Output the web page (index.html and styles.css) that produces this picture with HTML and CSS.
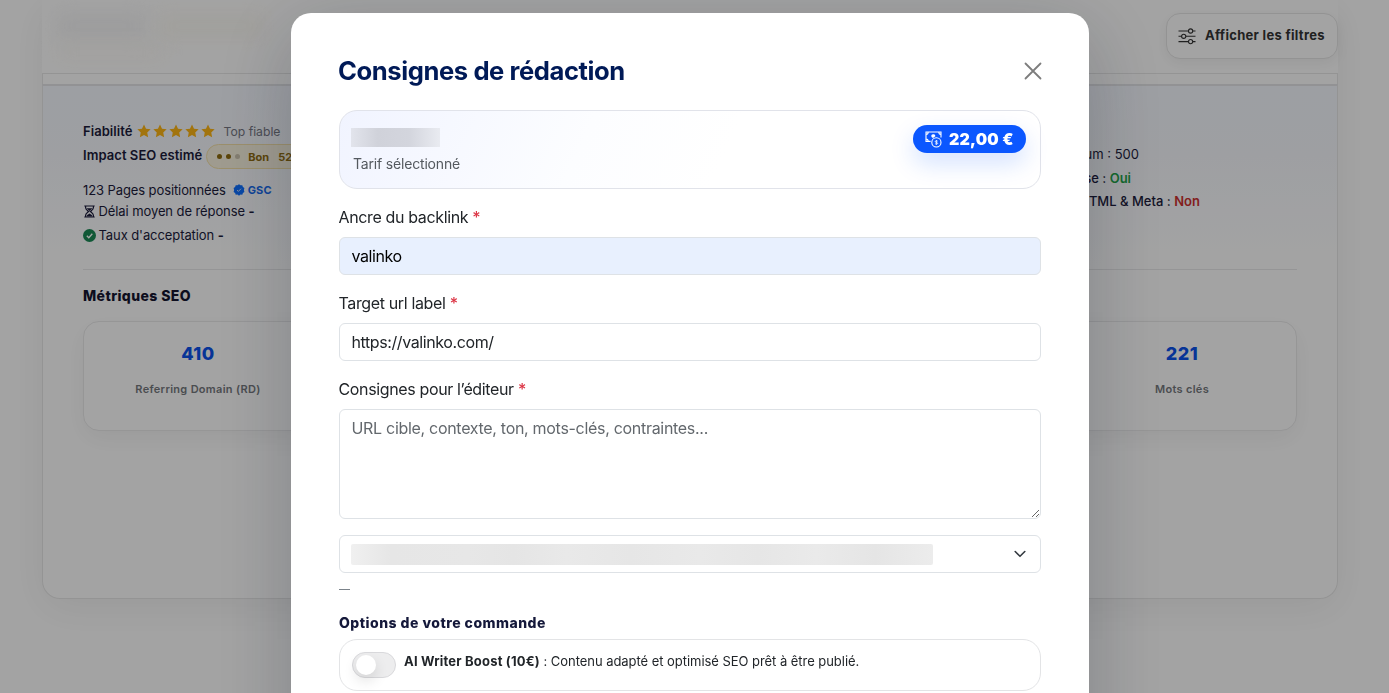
FILE: index.html
```
<!DOCTYPE html>
<html lang="fr">
<head>
    <meta charset="UTF-8">
    <meta name="viewport" content="width=device-width, initial-scale=1.0">
    <title>Consignes de rédaction</title>
    <link rel="stylesheet" href="styles.css">
</head>
<body>
    <div class="page">
        <header class="toolbar">
            <div class="toolbar-info">
                <span class="smudge smudge-grey"></span>
                <span class="smudge smudge-gold"></span>
                <span class="smudge smudge-sand"></span>
            </div>
            <button class="filter-btn" type="button">
                <svg width="18" height="17" viewBox="0 0 18 17" fill="none" stroke="currentColor" stroke-width="1.1">
                    <path d="M.5 3h10M14.7 3h2.8M.5 8.3h3.2M7.8 8.3h9.7M.5 13.6h10M14.7 13.6h2.8"/>
                    <circle cx="12.6" cy="3" r="2.1"/>
                    <circle cx="5.7" cy="8.3" r="2.1"/>
                    <circle cx="12.6" cy="13.6" r="2.1"/>
                </svg>
                <span>Afficher les filtres</span>
            </button>
        </header>
        <div class="strip"></div>
        <main class="site-card">
            <div class="site-details">
                <div class="details-left">
                    <div class="row row-trust">
                        <strong>Fiabilité</strong>
                        <span class="stars">
                            <svg viewBox="0 0 16 16"><path d="M8 .5l2.300 4.800 5.300.7-3.900 3.700 1 5.300L8 12.500 3.300 15l1-5.300L.4 6l5.300-.7z"/></svg>
                            <svg viewBox="0 0 16 16"><path d="M8 .5l2.300 4.800 5.300.7-3.900 3.700 1 5.300L8 12.500 3.300 15l1-5.300L.4 6l5.300-.7z"/></svg>
                            <svg viewBox="0 0 16 16"><path d="M8 .5l2.300 4.800 5.300.7-3.900 3.700 1 5.300L8 12.500 3.300 15l1-5.300L.4 6l5.300-.7z"/></svg>
                            <svg viewBox="0 0 16 16"><path d="M8 .5l2.300 4.800 5.300.7-3.900 3.700 1 5.300L8 12.500 3.300 15l1-5.300L.4 6l5.300-.7z"/></svg>
                            <svg viewBox="0 0 16 16"><path d="M8 .5l2.300 4.800 5.300.7-3.900 3.700 1 5.300L8 12.500 3.300 15l1-5.300L.4 6l5.300-.7z"/></svg>
                        </span>
                        <span class="trust-label">Top fiable</span>
                    </div>
                    <div class="row row-impact">
                        <strong>Impact SEO estimé</strong>
                        <span class="impact-pill"><i></i><i></i><i class="off"></i><b>Bon</b><b>52</b></span>
                    </div>
                    <div class="row row-pages">
                        <span>123 Pages positionnées</span>
                        <span class="gsc">
                            <svg width="12" height="12" viewBox="0 0 12 12"><path fill="#0d6efd" d="M6 .3l1.5 1 1.8-.1.6 1.7 1.5 1L10.900 6l.5 1.900-1.500 1.100-.6 1.700-1.800-.1-1.500 1.100-1.500-1.100-1.800.1-.6-1.700L.6 7.900 1.100 6 .6 3.900l1.500-1 .6-1.700 1.800.1z"/><path d="M4 6.100l1.400 1.300L8 4.700" fill="none" stroke="#cfdcf5" stroke-width="1"/></svg>
                            GSC
                        </span>
                    </div>
                    <div class="row row-delay">
                        <svg width="13" height="13" viewBox="0 0 13 13" fill="none" stroke="currentColor" stroke-width="1.200"><path d="M1.300 1h10.400M1.300 12h10.400M2.600 1v1.700c0 1.700 1.500 2.600 3 3.800-1.500 1.200-3 2.100-3 3.800V12M10.400 1v1.700c0 1.700-1.500 2.600-3 3.800 1.500 1.200 3 2.100 3 3.800V12"/><path fill="currentColor" stroke="none" d="M3.500 3.300h6L6.500 6zM3.500 11.500c.3-1.500 1.600-1.700 3-2.900 1.400 1.200 2.700 1.400 3 2.900z"/></svg>
                        <span>Délai moyen de réponse <b>-</b></span>
                    </div>
                    <div class="row row-rate">
                        <svg width="13" height="13" viewBox="0 0 13 13"><circle cx="6.500" cy="6.500" r="6.500" fill="#198754"/><path d="M3.800 6.700l2 2 3.500-4" fill="none" stroke="#fff" stroke-width="1.300"/></svg>
                        <span>Taux d'acceptation <b>-</b></span>
                    </div>
                </div>
                <div class="details-right">
                    <div class="rule-words">um : 500</div>
                    <div class="rule-link">se : <b class="yes">Oui</b></div>
                    <div class="rule-meta">TML &amp; Meta : <b class="no">Non</b></div>
                </div>
            </div>
            <h2 class="metrics-title">Métriques SEO</h2>
            <div class="metrics">
                <div class="metric">
                    <strong>410</strong>
                    <span>Referring Domain (RD)</span>
                </div>
                <div class="metric">
                    <strong>221</strong>
                    <span>Mots clés</span>
                </div>
            </div>
        </main>
    </div>

    <div class="backdrop">
        <form class="modal">
            <div class="modal-header">
                <h1>Consignes de rédaction</h1>
                <button class="close" type="button" aria-label="Fermer">
                    <svg width="18" height="18" viewBox="0 0 18 18"><path d="M1.500 1.500l15 15M16.500 1.500l-15 15" stroke="#7d7d7d" stroke-width="1.800" stroke-linecap="round"/></svg>
                </button>
            </div>
            <div class="offer">
                <div>
                    <div class="offer-name"></div>
                    <div class="offer-label">Tarif sélectionné</div>
                </div>
                <div class="price">
                    <svg width="17" height="17" viewBox="0 0 17 17" fill="none" stroke="#fff" stroke-width="1.100">
                        <path d="M5.600 10.400H1V1h15v5.500M1 3.400c1.400 0 2.200-.9 2.200-2.400M16 3.400c-1.400 0-2.200-.9-2.200-2.400M1 8c1.400 0 2.200.9 2.200 2.400"/>
                        <path d="M6.500 5.900a2 2 0 1 1 3.900-.7L8 7z" fill="#fff" stroke="none"/>
                        <circle cx="11.400" cy="11.400" r="4.600"/>
                        <path d="M12.700 10.300c-.4-.7-2.500-.7-2.500.3 0 1.100 2.500.6 2.500 1.700 0 1-2.200 1-2.600.2M11.400 9v4.800" stroke-width=".8"/>
                    </svg>
                    <span>22,00 €</span>
                </div>
            </div>

            <label for="anchor">Ancre du backlink <em>*</em></label>
            <input class="filled" type="text" id="anchor" name="anchor" value="valinko">

            <label for="target">Target url label <em>*</em></label>
            <input type="text" id="target" name="target" value="https://valinko.com/">

            <label for="brief">Consignes pour l’éditeur <em>*</em></label>
            <textarea id="brief" name="brief" placeholder="URL cible, contexte, ton, mots-clés, contraintes..."></textarea>

            <div class="select">
                <span class="select-value"></span>
                <svg width="12" height="8" viewBox="0 0 12 8"><path d="M1.200 1.500L6 6.300l4.800-4.800" fill="none" stroke="#343a40" stroke-width="1.600" stroke-linecap="round" stroke-linejoin="round"/></svg>
            </div>
            <div class="hint">—</div>

            <h3>Options de votre commande</h3>
            <div class="option">
                <span class="switch"></span>
                <p><b>AI Writer Boost (10€)</b> : Contenu adapté et optimisé SEO prêt à être publié.</p>
            </div>
        </form>
    </div>
</body>
</html>
```
FILE: styles.css
```
* {
    box-sizing: border-box;
}
body {
    margin: 0;
    height: 693px;
    overflow: hidden;
    font-family: Inter, "Liberation Sans", sans-serif;
    font-size: 13px;
    color: #1b1b3a;
    background: #fbfbfb;
}
button {
    font-family: inherit;
    cursor: pointer;
}
.page {
    width: 1296px;
    height: 599px;
    margin-left: 42px;
    border-radius: 0 0 18px 18px;
    box-shadow: 0 10px 40px rgba(0, 0, 0, 0.06);
}
.toolbar {
    display: flex;
    justify-content: space-between;
    height: 73px;
    padding-top: 13px;
    background: #fbfbfb;
}
.toolbar-info {
    display: grid;
    grid-template-columns: 90px 110px;
    gap: 6px 10px;
    align-content: start;
    padding-left: 14px;
}
.smudge {
    height: 26px;
    filter: blur(10px);
}
.smudge-grey {
    background: #f0f0f1;
}
.smudge-gold {
    background: #f7f5f0;
}
.smudge-sand {
    grid-column: 1 / 3;
    width: 110px;
    height: 14px;
    background: #f8f6f2;
}
.filter-btn {
    display: flex;
    align-items: center;
    gap: 9px;
    width: 172px;
    height: 46px;
    padding: 0 0 0 11px;
    border: 1px solid #e2e2e2;
    border-radius: 14px;
    background: #fbfbfb;
    box-shadow: 0 4px 14px rgba(0, 0, 0, 0.06);
    color: #333;
    font-size: 13px;
    font-weight: 700;
    letter-spacing: 0.300px;
    white-space: nowrap;
}
.filter-btn svg {
    margin-top: 1px;
}
.filter-btn span {
    margin-top: -2px;
}
.strip {
    height: 11px;
    border: 1px solid #e3e3e3;
    border-bottom: 0;
    background: #fbfbfb;
}
.site-card {
    height: 515px;
    padding: 0 40px;
    border: 1px solid #e3e3e3;
    border-top: 2px solid #e0e1e4;
    border-radius: 0 0 18px 18px;
    background: linear-gradient(#f1f4fa 0, #f3f5f9 70px, #fbfbfb 180px);
}
.site-details {
    display: flex;
    justify-content: space-between;
    height: 184px;
    border-bottom: 1px solid #e5e5e6;
}
.details-left {
    padding-top: 35px;
    white-space: nowrap;
}
.row {
    display: flex;
    align-items: center;
    height: 20px;
}
.row strong {
    font-weight: 600;
    letter-spacing: 0.060px;
}
.stars {
    display: flex;
    gap: 2px;
    margin-left: 4px;
}
.stars svg {
    width: 14px;
    height: 14px;
    fill: #f9b214;
}
.trust-label {
    margin-left: 9px;
    color: #747681;
    font-size: 12.200px;
}
.row-impact {
    height: 28px;
    margin-top: 1px;
}
.row-impact strong {
    margin-bottom: 3px;
}
.impact-pill {
    display: flex;
    align-items: center;
    width: 106px;
    height: 25px;
    margin-left: 4px;
    padding: 1px 0 0 10px;
    border: 1px solid #efdca6;
    border-radius: 13px;
    background: #f5efdc;
    color: #8d6a0f;
    font-size: 11px;
}
.impact-pill i {
    width: 5px;
    height: 5px;
    margin-right: 4px;
    border-radius: 50%;
    background: #8d6a0f;
}
.impact-pill i.off {
    background: #c9c0ad;
}
.impact-pill b {
    margin-left: 4px;
    margin-right: 5px;
}
.row-pages {
    margin-top: 10px;
    letter-spacing: -0.100px;
}
.gsc {
    display: flex;
    align-items: center;
    gap: 3px;
    margin-left: 7px;
    color: #1769e8;
    font-size: 11px;
    font-weight: 700;
    letter-spacing: 0.100px;
}
.row-delay,
.row-rate {
    gap: 3px;
    letter-spacing: -0.090px;
}
.row-delay {
    margin-top: 1px;
}
.row-rate {
    margin-top: 4px;
}
.row-delay svg,
.row-rate svg {
    margin-left: -0.500px;
}
.details-right {
    width: 220px;
    padding-top: 57px;
    padding-right: 97px;
    text-align: right;
    white-space: nowrap;
    line-height: 22px;
    font-weight: 500;
}
.rule-words {
    padding-right: 61px;
    font-weight: 400;
}
.rule-link {
    margin-top: 2px;
    padding-right: 69px;
}
.rule-meta {
    margin-top: 1px;
}
.yes {
    color: #23a047;
    font-weight: 600;
}
.no {
    color: #c9302f;
    font-weight: 600;
}
.metrics-title {
    margin: 17px 0 17px;
    font-size: 14px;
    line-height: 17px;
    font-weight: 800;
    letter-spacing: 0.400px;
    color: #14142f;
}
.metrics {
    display: flex;
    justify-content: space-between;
    height: 110px;
    border: 1px solid #e6e6e7;
    border-radius: 16px;
    background: #fbfbfb;
    box-shadow: 0 8px 24px rgba(0, 0, 0, 0.05);
}
.metric {
    display: flex;
    flex-direction: column;
    align-items: center;
    width: 228px;
    padding-top: 20px;
}
.metric strong {
    color: #0b50e8;
    font-size: 18px;
    line-height: 24px;
    font-weight: 800;
    letter-spacing: 0.500px;
}
.metric span {
    margin-top: 15px;
    color: #73777c;
    font-size: 11px;
    line-height: 16px;
    font-weight: 600;
    letter-spacing: 0.300px;
}

.backdrop {
    position: fixed;
    inset: 0;
    overflow: hidden;
    background: rgba(0, 0, 0, 0.35);
}
.modal {
    width: 798px;
    height: 760px;
    margin: 13px 0 0 291px;
    padding: 40px 48px;
    border-radius: 20px;
    background: #fff;
    box-shadow: 0 20px 80px rgba(15, 23, 42, 0.24);
    color: #212529;
}
.modal-header {
    display: flex;
    justify-content: space-between;
    align-items: center;
    height: 36px;
}
h1 {
    margin: -2px 0 0 -1px;
    font-size: 25.600px;
    font-weight: 700;
    letter-spacing: -0.420px;
    color: #001a57;
}
.close {
    display: flex;
    padding: 0;
    margin-right: -1px;
    border: 0;
    background: none;
}
.offer {
    display: flex;
    justify-content: space-between;
    height: 79px;
    margin: 21px 0 16px;
    padding: 14px;
    border: 1px solid #e1e3ea;
    border-radius: 18px;
    background: linear-gradient(115deg, #f1f4ff 0, #fcfdff 35%, #fff 55%);
}
.offer-name {
    width: 89px;
    height: 19px;
    margin: 3px 0 0 -3px;
    background: linear-gradient(90deg, #e2e4ec, #d0d2da 30%, #d3d5dd 65%, #e9ebf1);
}
.offer-label {
    margin-top: 6px;
    margin-left: -1px;
    color: #54595f;
    font-size: 14px;
    line-height: 21px;
    letter-spacing: -0.180px;
}
.price {
    display: flex;
    align-items: center;
    gap: 7px;
    width: 113px;
    height: 28px;
    padding-left: 12px;
    border-radius: 14px;
    background: #0b57ff;
    box-shadow: 0 10px 24px rgba(11, 87, 255, 0.18);
    color: #fff;
    font-size: 16px;
    font-weight: 900;
    letter-spacing: 0.200px;
    white-space: nowrap;
}
label {
    display: block;
    margin-bottom: 8px;
    margin-left: -0.500px;
    font-size: 16px;
    line-height: 24px;
    letter-spacing: -0.360px;
}
label em {
    color: #dc3545;
    font-style: normal;
    font-weight: 500;
}
input,
textarea {
    display: block;
    width: 702px;
    height: 38px;
    margin: 0 0 16px;
    padding: 6px 12px 6px 11.500px;
    border: 1px solid #dee2e6;
    border-radius: 6px;
    outline: 0;
    background: #fff;
    color: #212529;
    font-family: inherit;
    font-size: 16px;
    line-height: 24px;
    letter-spacing: -0.400px;
}
input.filled {
    background: #e8f0fe;
    color: #000;
}
textarea {
    height: 110px;
    resize: vertical;
    letter-spacing: -0.300px;
}
textarea::placeholder {
    color: #63686d;
}
.select {
    display: flex;
    align-items: center;
    justify-content: space-between;
    height: 38px;
    padding: 0 14px 0 11px;
    border: 1px solid #dee2e6;
    border-radius: 6px;
}
.select-value {
    width: 582px;
    height: 21px;
    border-radius: 2px;
    background: linear-gradient(90deg, #f0f0f0, #e6e6e6 7%, #e7e7e7 20%, #e5e5e5 28%, #e9e9e9 37%, #e6e6e6 48%, #e9e9e9 60%, #e6e6e6 70%, #eaeaea 80%, #e5e5e5 90%, #ececec);
}
.hint {
    margin-top: 4px;
    font-size: 11px;
    line-height: 24px;
    color: #6c757d;
}
h3 {
    margin: 12px 0 6px;
    font-size: 14px;
    line-height: 20px;
    font-weight: 800;
    letter-spacing: 0.480px;
    color: #14183a;
}
.option {
    display: flex;
    height: 52px;
    padding: 12px;
    border: 1px solid #e3e4e6;
    border-radius: 18px;
}
.switch {
    display: flex;
    align-items: center;
    width: 44px;
    height: 26px;
    padding-left: 3px;
    border: 1px solid #d9d9dc;
    border-radius: 13px;
    background: #ededee;
}
.switch::before {
    content: "";
    width: 20px;
    height: 20px;
    border-radius: 50%;
    background: #fff;
    box-shadow: 0 6px 14px rgba(0, 0, 0, 0.12);
}
.option p {
    margin: -1px 0 0 8px;
    font-size: 13px;
    line-height: 20px;
    letter-spacing: -0.045px;
}
.option b {
    letter-spacing: 0.190px;
}
```
